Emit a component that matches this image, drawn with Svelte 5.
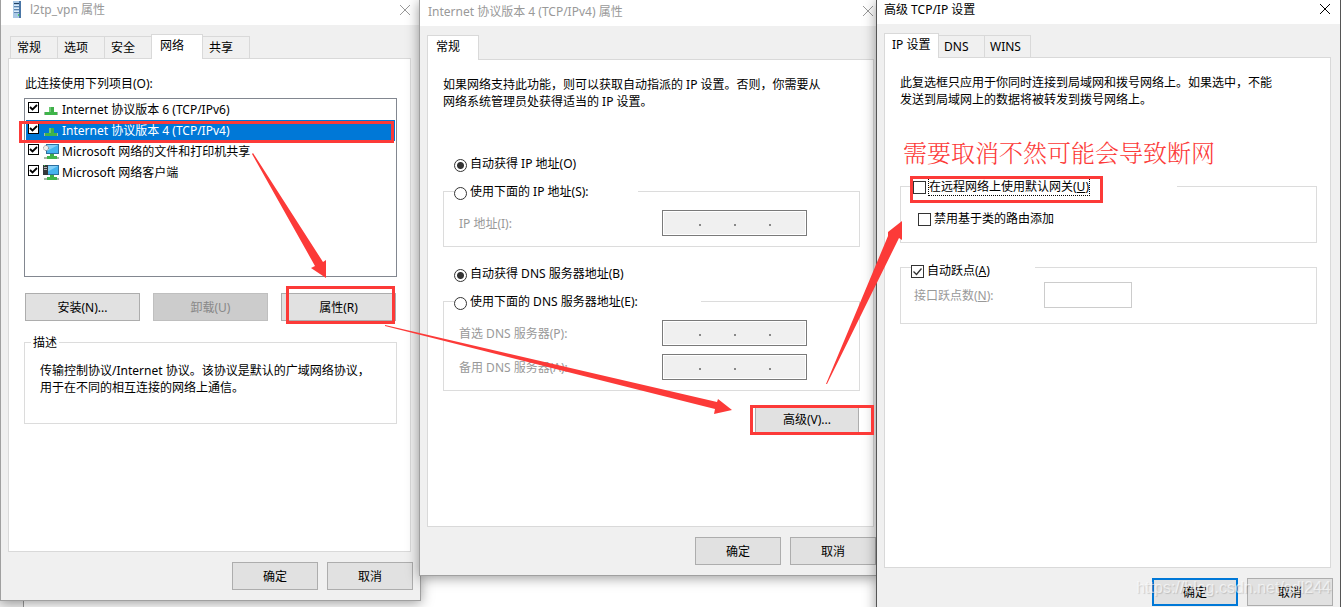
<script lang="ts">
  type Item = { id: string; label: string; icon: string; checked: boolean };

  let items = $state<Item[]>([
    { id: 'ipv6', label: 'Internet 协议版本 6 (TCP/IPv6)', icon: 'protocol', checked: true },
    { id: 'ipv4', label: 'Internet 协议版本 4 (TCP/IPv4)', icon: 'protocol', checked: true },
    { id: 'share', label: 'Microsoft 网络的文件和打印机共享', icon: 'share', checked: true },
    { id: 'client', label: 'Microsoft 网络客户端', icon: 'client', checked: true }
  ]);
  let selected = $state('ipv4');
  let ipMode = $state('auto');
  let dnsMode = $state('auto');
  let useGateway = $state(false);
  let noClassRoute = $state(false);
  let autoMetric = $state(true);
  let metric = $state('');
  const ipDots = [0, 1, 2];
</script>

{#snippet closeIcon()}
  <svg width="12" height="12" viewBox="0 0 12 12" fill="none" stroke="currentColor">
    <path d="M1 1l10 10M11 1L1 11" />
  </svg>
{/snippet}

{#snippet ipField(id: string, disabled: boolean)}
  <div class="ip-field">
    <input {id} type="text" {disabled} />
    {#each ipDots as dot (dot)}<i></i>{/each}
  </div>
{/snippet}

<main class="desktop">
  <div class="behind"></div>

  <section class="window vpn">
    <header class="titlebar inactive">
      <svg width="10" height="17" viewBox="0 0 10 17">
        <rect x="1" y="0" width="8" height="17" fill="#4a76a6" />
        <rect x="1" y="0" width="6" height="17" fill="#a9c8e6" />
        <path d="M2 2.5h5" stroke="#1f3f60" />
        <path d="M2 5.5h5M2 8.5h5M2 11.5h5" stroke="#5983ad" />
        <path d="M2 4.5h5M2 7.5h5M2 10.5h5" stroke="#dcebf8" />
        <rect x="6" y="13" width="1" height="2" fill="#55d06a" />
      </svg>
      <h1>l2tp_vpn 属性</h1>
      <button class="close" aria-label="关闭">{@render closeIcon()}</button>
    </header>
    <div class="body">
      <nav class="tabs">
        <button>常规</button>
        <button>选项</button>
        <button>安全</button>
        <button class="active">网络</button>
        <button>共享</button>
      </nav>
      <div class="page">
        <p class="caption">此连接使用下列项目(O):</p>
        <ul class="list">
          {#each items as item (item.id)}
            <li class:selected={selected === item.id}>
              <input type="checkbox" id={item.id} bind:checked={item.checked} onchange={() => (selected = item.id)} />
              <svg width="16" height="16" viewBox="0 0 16 16">
                {#if item.icon === 'protocol'}
                  <path d="M6 5h5v5H6z" fill="#3fae49" />
                  <path d="M6 5h2v5H6z" fill="#6cc974" />
                  <path d="M1 10h14v3H1z" fill="#a5b5a6" />
                  <path d="M2 10h12v3H2z" fill="#3fb54a" />
                {:else}
                  <path d="M7 9h4v4H7z" fill="#3fae49" />
                  <path d="M1 13h15v2H1z" fill="#a5b5a6" />
                  <path d="M4 12h10v3H4z" fill="#3fb54a" />
                  <rect x="3" y="0" width="13" height="10" fill="#2b6f9f" />
                  <rect x="4" y="1" width="11" height="8" fill="#45b3ee" />
                  <path d="M4 7l11-6H4z" fill="#82d0f8" />
                  {#if item.icon === 'share'}
                    <circle cx="3" cy="4" r="2.5" fill="#eee" stroke="#7b7b7b" stroke-dasharray="1 1" />
                  {:else}
                    <rect x="0" y="0" width="5" height="10" fill="#35383b" />
                    <path d="M1 2.5h3M1 4.5h3" stroke="#b5b5b5" />
                    <rect x="1" y="0" width="1" height="1" fill="#45cf59" />
                  {/if}
                {/if}
              </svg>
              <label for={item.id}>{item.label}</label>
            </li>
          {/each}
        </ul>
        <div class="actions">
          <button class="btn">安装(N)...</button>
          <button class="btn" disabled>卸载(U)</button>
          <button class="btn">属性(R)</button>
        </div>
        <fieldset class="description">
          <legend>描述</legend>
          <p>传输控制协议/Internet 协议。该协议是默认的广域网络协议，<br />用于在不同的相互连接的网络上通信。</p>
        </fieldset>
      </div>
      <footer>
        <button class="btn">确定</button>
        <button class="btn">取消</button>
      </footer>
    </div>
  </section>

  <section class="window ipv4">
    <header class="titlebar inactive">
      <h1>Internet 协议版本 4 (TCP/IPv4) 属性</h1>
      <button class="close" aria-label="关闭">{@render closeIcon()}</button>
    </header>
    <div class="body">
      <nav class="tabs">
        <button class="active">常规</button>
      </nav>
      <div class="page">
        <p>如果网络支持此功能，则可以获取自动指派的 IP 设置。否则，你需要从<br />网络系统管理员处获得适当的 IP 设置。</p>
        <div class="choice">
          <label class="radio"><input type="radio" name="ip" value="auto" bind:group={ipMode} /><span>自动获得 IP 地址(O)</span></label>
          <fieldset>
            <legend class="ip-legend">
              <label class="radio"><input type="radio" name="ip" value="manual" bind:group={ipMode} /><span>使用下面的 IP 地址(S):</span></label>
            </legend>
            <div class="field" class:off={ipMode === 'auto'}>
              <label for="ip-address">IP 地址(I):</label>
              {@render ipField('ip-address', ipMode === 'auto')}
            </div>
          </fieldset>
        </div>
        <div class="choice dns">
          <label class="radio"><input type="radio" name="dns" value="auto" bind:group={dnsMode} /><span>自动获得 DNS 服务器地址(B)</span></label>
          <fieldset>
            <legend class="dns-legend">
              <label class="radio"><input type="radio" name="dns" value="manual" bind:group={dnsMode} /><span>使用下面的 DNS 服务器地址(E):</span></label>
            </legend>
            <div class="field" class:off={dnsMode === 'auto'}>
              <label for="dns-first">首选 DNS 服务器(P):</label>
              {@render ipField('dns-first', dnsMode === 'auto')}
            </div>
            <div class="field" class:off={dnsMode === 'auto'}>
              <label for="dns-second">备用 DNS 服务器(A):</label>
              {@render ipField('dns-second', dnsMode === 'auto')}
            </div>
          </fieldset>
        </div>
        <button class="btn advanced">高级(V)...</button>
      </div>
      <footer>
        <button class="btn">确定</button>
        <button class="btn">取消</button>
      </footer>
    </div>
  </section>

  <section class="window tcpip">
    <header class="titlebar">
      <h1>高级 TCP/IP 设置</h1>
      <button class="close" aria-label="关闭">{@render closeIcon()}</button>
    </header>
    <div class="body">
      <nav class="tabs">
        <button class="active">IP 设置</button>
        <button>DNS</button>
        <button>WINS</button>
      </nav>
      <div class="page">
        <p>此复选框只应用于你同时连接到局域网和拨号网络上。如果选中，不能<br />发送到局域网上的数据将被转发到拨号网络上。</p>
        <fieldset class="gateway">
          <legend class="gateway-legend">
            <label class="check"><input type="checkbox" bind:checked={useGateway} /><span class="focus">在远程网络上使用默认网关(<u>U</u>)</span></label>
          </legend>
          <label class="check"><input type="checkbox" bind:checked={noClassRoute} /><span>禁用基于类的路由添加</span></label>
        </fieldset>
        <fieldset class="metric">
          <legend class="metric-legend">
            <label class="check"><input type="checkbox" bind:checked={autoMetric} /><span>自动跃点(<u>A</u>)</span></label>
          </legend>
          <div class="field" class:off={autoMetric}>
            <label for="metric">接口跃点数(<u>N</u>):</label>
            <input id="metric" type="text" disabled={autoMetric} bind:value={metric} />
          </div>
        </fieldset>
      </div>
      <footer>
        <button class="btn default">确定</button>
        <button class="btn">取消</button>
      </footer>
    </div>
  </section>

  <svg class="marks" width="1341" height="607" viewBox="0 0 1341 607">
    <g fill="none" stroke="#fc3a38" stroke-width="3">
      <rect x="20.5" y="122.5" width="372" height="19" />
      <rect x="287.5" y="287.5" width="106" height="35" />
      <rect x="751.5" y="406.5" width="121" height="27" />
      <rect x="911.5" y="177.5" width="190" height="24" />
    </g>
    <g fill="#fc3a38">
      <path d="M253 153L323 262L326 260L326 278L311 268L315 266L252 154z" />
      <path d="M385 325L717 402L718 399L732 410L714 414L715 409L385 326z" />
      <path d="M826 384L888 236L888 232L902 221L902 240L899 238L827 384z" />
    </g>
  </svg>
  <p class="note">需要取消不然可能会导致断网</p>
  <p class="watermark">https://blog.csdn.net/sdl244</p>
</main>

<style>
  :global(body) {
    margin: 0;
    background: #fff;
  }

  .desktop {
    position: relative;
    height: 100vh;
    overflow: hidden;
    background: #fff;
    color: #000;
    font: 12px/17px "Noto Sans", "Noto Sans CJK SC", sans-serif;
  }

  button, input {
    font: inherit;
    color: inherit;
    margin: 0;
    box-sizing: border-box;
  }

  h1, p, ul, fieldset {
    margin: 0;
    padding: 0;
  }

  .behind {
    position: absolute;
    left: 0;
    bottom: 0;
    width: 23px;
    height: 60px;
    border-right: 1px solid #999;
    background: #f0f0f0;
  }

  .window {
    position: absolute;
    top: 0;
    display: flex;
    flex-direction: column;
    box-sizing: border-box;
    background: #f0f0f0;
    border: 1px solid #a0a0a0;
    border-top: 0;
    box-shadow: 0 2px 12px rgba(0, 0, 0, 0.4);
  }
  .vpn { left: 0; width: 421px; height: 601px; }
  .ipv4 { left: 419px; width: 459px; height: 576px; }
  .tcpip { left: 876px; width: 465px; height: 620px; border-color: #555; }

  .titlebar {
    display: flex;
    align-items: center;
    gap: 8px;
    height: 25px;
    padding: 0 9px 6px 11px;
    box-sizing: border-box;
    background: #fff;
  }
  .ipv4 .titlebar { height: 26px; padding: 0 3px 4px 8px; }
  .tcpip .titlebar { height: 24px; padding-left: 7px; }
  .titlebar h1 {
    flex: 1;
    font-size: 12px;
    font-weight: 400;
  }
  .inactive { color: #999; }

  .close {
    display: flex;
    padding: 0;
    border: 0;
    background: none;
  }

  .body {
    flex: 1;
    display: flex;
    flex-direction: column;
    padding: 9px 9px 10px 7px;
  }
  .ipv4 .body { padding: 9px 3px 10px 7px; }
  .tcpip .body { padding: 9px 9px 13px 7px; }

  .tabs {
    display: flex;
    align-items: flex-end;
    height: 25px;
    padding-left: 2px;
    margin-bottom: -1px;
  }
  .tabs button {
    width: 48px;
    height: 23px;
    padding: 0 12px 0 6px;
    margin-right: -1px;
    border: 1px solid #d9d9d9;
    background: #f0f0f0;
    text-align: left;
    white-space: nowrap;
  }
  .tabs .active {
    position: relative;
    width: 52px;
    height: 25px;
    padding: 0 8px 3px;
    border-bottom: 0;
    background: #fff;
  }
  .ipv4 .tabs, .tcpip .tabs { padding-left: 0; }
  .tcpip .tabs button { width: 47px; padding-left: 5px; }
  .tcpip .tabs .active { width: 55px; padding-left: 7px; }

  .page {
    flex: 1;
    display: flex;
    flex-direction: column;
    padding: 16px 13px 0 15px;
    border: 1px solid #d9d9d9;
    background: #fff;
  }

  .caption { padding-left: 1px; }

  .list {
    height: 179px;
    margin-top: 6px;
    box-sizing: border-box;
    border: 1px solid #828790;
    list-style: none;
  }
  .list li {
    display: flex;
    align-items: center;
    height: 21px;
    margin: 0 1px;
    padding-left: 2px;
  }
  .list label { padding-left: 3px; }
  .list svg { margin-left: 4px; }
  .list .selected label { color: #fff; }
  .list .selected { background: #0078d7; }

  input[type='checkbox'] {
    appearance: none;
    width: 13px;
    height: 13px;
    margin-top: 2px;
    border: 1px solid #333;
    background: #fff;
  }
  input[type='checkbox']:checked {
    background: #fff url("data:image/svg+xml,%3Csvg xmlns='http://www.w3.org/2000/svg' viewBox='0 0 11 11'%3E%3Cpath d='M1.5 5.5l3 3 5-6' fill='none' stroke='%23333' stroke-width='1.3'/%3E%3C/svg%3E");
  }
  .list input[type='checkbox'] {
    width: 11px;
    height: 11px;
    margin: 0 0 4px;
    border-color: #000;
  }
  .list input[type='checkbox']:checked {
    background: #fff url("data:image/svg+xml,%3Csvg xmlns='http://www.w3.org/2000/svg' viewBox='0 0 9 9'%3E%3Cpath d='M1 4l2.5 2.5L8 2' fill='none' stroke='%23000' stroke-width='1.8'/%3E%3C/svg%3E");
  }

  .btn {
    height: 28px;
    padding: 0;
    border: 1px solid #adadad;
    background: #e1e1e1;
  }
  .btn:disabled {
    border-color: #bfbfbf;
    background: #ccc;
    color: #888;
  }
  .default { border: 2px solid #0078d7; }

  .actions {
    display: flex;
    gap: 13px;
    margin: 16px 1px 0;
  }
  .actions .btn { flex: 1; }

  fieldset {
    min-width: 0;
    box-sizing: border-box;
    border: 1px solid #dcdcdc;
  }
  legend { padding: 0; }

  .description {
    height: 90px;
    margin-top: 13px;
    padding-left: 15px;
  }
  .description legend { margin-left: -9px; padding: 0 2px; }
  .description p { padding-top: 11px; }

  footer {
    display: flex;
    justify-content: flex-end;
    gap: 9px;
    margin-right: -2px;
    padding-top: 10px;
  }
  footer .btn { width: 86px; }

  .radio, .check {
    display: flex;
    align-items: center;
    gap: 3px;
  }
  input[type='radio'] {
    appearance: none;
    width: 13px;
    height: 13px;
    margin-top: 3px;
    border: 1px solid #333;
    border-radius: 50%;
    background: #fff;
  }
  input[type='radio']:checked {
    background: radial-gradient(circle, #333 3px, #fff 4px);
  }

  .choice { margin-top: 45px; }
  .choice > .radio { padding-left: 11px; }
  .choice fieldset { margin-top: 11px; padding: 0 52px 10px 15px; }
  .choice legend { margin-left: -5px; }
  .dns { margin-top: 18px; }
  .ip-legend { width: 184px; }
  .dns-legend { width: 247px; }

  .field {
    display: flex;
    justify-content: space-between;
    align-items: center;
  }
  .choice .field { margin-top: 8px; }
  .choice legend + .field { margin-top: 10px; }
  .off label { color: #999; }

  .ip-field {
    position: relative;
    display: flex;
    align-items: center;
    justify-content: center;
    gap: 33px;
    width: 145px;
    height: 26px;
  }
  .ip-field input {
    position: absolute;
    inset: 0;
    width: 100%;
    border: 1px solid #7a7a7a;
    background: #f0f0f0;
    box-shadow: inset 0 0 0 1px #fff;
  }
  .ip-field i {
    position: relative;
    width: 2px;
    height: 2px;
    margin-top: 4px;
    background: #888;
  }

  .advanced {
    align-self: flex-end;
    width: 104px;
    margin: 14px 1px 0 0;
  }

  .gateway { height: 65px; margin-top: 70px; padding-left: 17px; }
  .gateway-legend { width: 264px; margin-left: -5px; }
  .gateway > .check { padding-top: 15px; }
  .focus { outline: 1px dotted #000; }
  .metric { height: 68px; margin-top: 13px; padding: 0 184px 0 13px; }
  .metric-legend { width: 124px; margin-left: -3px; padding-top: 6px; }
  .metric .field { margin-top: 3px; }
  .metric input[type='text'] {
    width: 88px;
    height: 26px;
    border: 1px solid #ccc;
    background: #fff;
  }

  .marks {
    position: absolute;
    top: 0;
    left: 0;
    pointer-events: none;
  }

  .note {
    position: absolute;
    top: 138px;
    left: 903px;
    color: #fc3a38;
    font: 300 24px/32px "Liberation Serif", "Noto Serif CJK SC", "Noto Sans CJK SC", serif;
  }

  .watermark {
    position: absolute;
    right: 10px;
    bottom: 9px;
    color: rgba(255, 255, 255, 0.6);
    font: 16px/20px "Liberation Sans", sans-serif;
    text-shadow: 1px 1px 1px rgba(0, 0, 0, 0.15);
    pointer-events: none;
  }
</style>
